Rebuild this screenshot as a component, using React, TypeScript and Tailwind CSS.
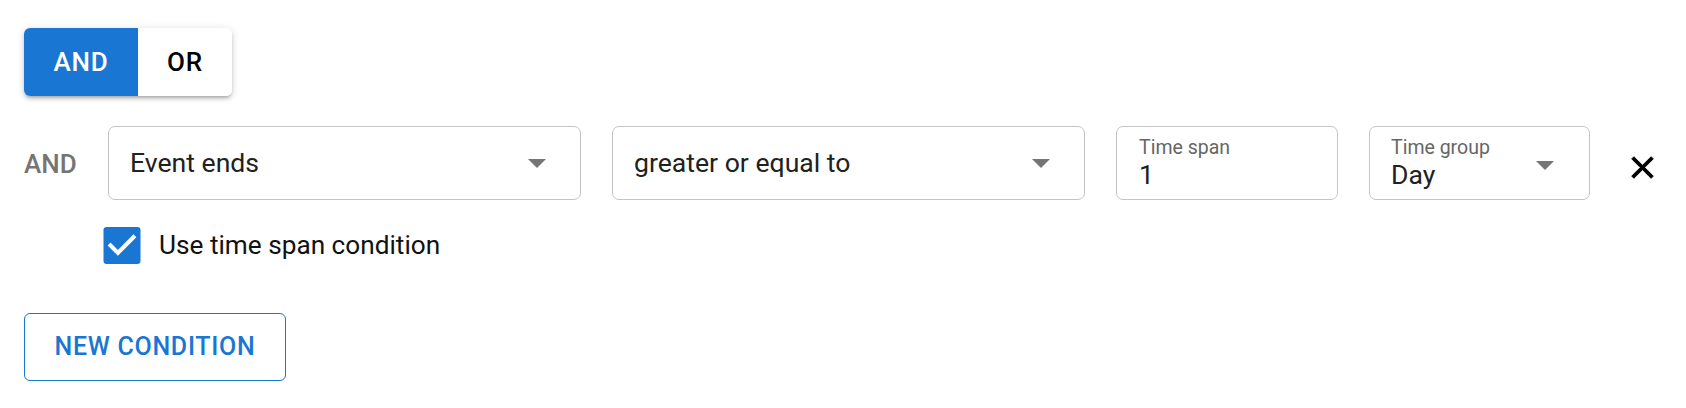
import React from "react";

function Arrow() {
  return (
    <svg width="18" height="9" viewBox="0 0 10 5" className="shrink-0">
      <path d="M0 0l5 5 5-5z" fill="#757575" />
    </svg>
  );
}

export default function App() {
  return (
    <div className="w-[1686px] h-[408px] bg-white pt-[28px] pl-[24px] font-['Roboto','Liberation_Sans',sans-serif] text-[#212121]">
      {/* AND / OR toggle */}
      <div className="inline-flex h-[68px] w-[208px] rounded-[6px] overflow-hidden bg-white shadow-[0_3px_3px_-2px_rgba(0,0,0,0.2),0_3px_4px_0_rgba(0,0,0,0.14),0_1px_8px_0_rgba(0,0,0,0.12)]">
        <button className="w-[114px] h-full bg-[#1976d2] text-white text-[26px] font-medium tracking-[0.02857em] flex items-center justify-center">
          AND
        </button>
        <button className="w-[94px] h-full bg-white text-black text-[26px] font-medium tracking-[0.02857em] flex items-center justify-center">
          OR
        </button>
      </div>

      {/* Condition row */}
      <div className="mt-[30px] h-[74px] flex items-center">
        <div className="w-[84px] text-[26px] font-medium text-[#757575] mt-[3px]">AND</div>
        <div className="w-[473px] h-[74px] border border-[#c4c4c4] rounded-[7px] flex items-center justify-between pl-[21px] pr-[34px]">
          <span className="text-[26.6px] leading-[31px] -mt-[2px]">Event ends</span>
          <Arrow />
        </div>
        <div className="ml-[31px] w-[473px] h-[74px] border border-[#c4c4c4] rounded-[7px] flex items-center justify-between pl-[21px] pr-[34px]">
          <span className="text-[26.6px] leading-[31px] -mt-[2px]">greater or equal to</span>
          <Arrow />
        </div>
        <div className="ml-[31px] w-[222px] h-[74px] border border-[#c4c4c4] rounded-[7px] pl-[22px] pt-[9px] flex flex-col">
          <span className="text-[19.5px] leading-[23px] text-[#666666]">Time span</span>
          <span className="text-[26.6px] leading-[31px]">1</span>
        </div>
        <div className="ml-[31px] w-[221px] h-[74px] border border-[#c4c4c4] rounded-[7px] pl-[21px] pr-[35px] pt-[9px] flex items-start justify-between">
          <div className="flex flex-col">
            <span className="text-[19.5px] leading-[23px] text-[#666666]">Time group</span>
            <span className="text-[26.6px] leading-[31px]">Day</span>
          </div>
          <div className="mt-[25px]">
            <Arrow />
          </div>
        </div>
        <div className="ml-[34px] w-[37px] h-[37px] mt-[8px] flex items-center justify-center">
          <svg width="37" height="37" viewBox="0 0 24 24">
            <path
              d="M19 6.41 17.59 5 12 10.59 6.41 5 5 6.41 10.59 12 5 17.59 6.41 19 12 13.41 17.59 19 19 17.59 13.41 12z"
              fill="#000000"
              stroke="#000000"
              strokeWidth="0.6"
              strokeLinejoin="miter"
            />
          </svg>
        </div>
      </div>

      {/* Checkbox row */}
      <div className="mt-[27px] h-[37px] flex items-center pl-[79px]">
        <svg width="38" height="37" viewBox="3 3 18 18" className="shrink-0">
          <rect x="3" y="3" width="18" height="18" rx="1.6" fill="#1976d2" />
          <path d="M10 17l-5-5 1.41-1.41L10 14.17l7.59-7.59L19 8l-9 9z" fill="#ffffff" />
        </svg>
        <span className="ml-[18px] text-[26.2px] leading-[31px] text-[#111111]">Use time span condition</span>
      </div>

      {/* New condition button */}
      <button className="mt-[49px] w-[262px] h-[68px] border border-[#1976d2] rounded-[6px] text-[#1976d2] text-[25px] font-medium tracking-[0.02857em] flex items-center justify-center">
        NEW CONDITION
      </button>
    </div>
  );
}
